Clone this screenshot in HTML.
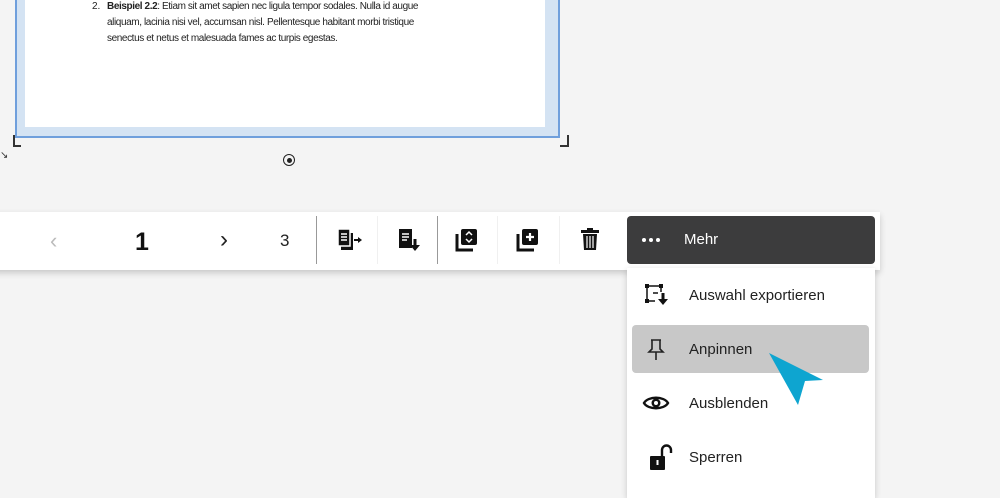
<!DOCTYPE html>
<html><head><meta charset="utf-8"><style>
*{margin:0;padding:0;box-sizing:border-box}
body{width:1000px;height:487px;background:#f4f4f4;position:relative;overflow:hidden;font-family:"Liberation Sans",sans-serif;color:#111}
.abs{position:absolute}
</style></head><body>
<div class="abs" style="left:15px;top:-5px;width:545px;height:143px;border:2px solid #6f9fdc;background:#d4e3f3"></div>
<div class="abs" style="left:25px;top:0;width:520px;height:127px;background:#fff"></div>
<div class="abs" style="left:92px;top:-1px;font-size:10px;line-height:16px;color:#222">2.</div>
<div class="abs" style="left:107px;top:-1px;font-size:10px;line-height:16px;color:#222;width:340px;letter-spacing:-0.4px;white-space:nowrap"><b>Beispiel 2.2</b>: Etiam sit amet sapien nec ligula tempor sodales. Nulla id augue<br>aliquam, lacinia nisi vel, accumsan nisl. Pellentesque habitant morbi tristique<br>senectus et netus et malesuada fames ac turpis egestas.</div>
<div class="abs" style="left:13px;top:135px;width:8px;height:12px;border-left:2px solid #333;border-bottom:2px solid #333"></div>
<div class="abs" style="left:560px;top:135px;width:9px;height:12px;border-right:2px solid #333;border-bottom:2px solid #333"></div>
<div class="abs" style="left:283px;top:154px;width:12px;height:12px;border:1.5px solid #222;border-radius:50%"></div>
<div class="abs" style="left:286.5px;top:157.5px;width:5px;height:5px;background:#222;border-radius:50%"></div>
<div class="abs" style="left:0;top:150px;font-size:10px;color:#333">↘</div>

<div class="abs" style="left:-10px;top:212px;width:890px;height:58px;background:#fff;box-shadow:0 3px 6px rgba(0,0,0,.18)"></div>
<div class="abs" style="left:50px;top:228px;font-size:22px;color:#bbb">‹</div>
<div class="abs" style="left:135px;top:228px;font-size:25px;color:#111;font-weight:bold">1</div>
<div class="abs" style="left:220px;top:226px;font-size:24px;color:#222">›</div>
<div class="abs" style="left:280px;top:231px;font-size:17px;color:#222">3</div>
<div class="abs" style="left:316px;top:216px;width:1px;height:48px;background:#999"></div>
<div class="abs" style="left:377px;top:216px;width:1px;height:48px;background:#f0f0f0"></div>
<div class="abs" style="left:437px;top:216px;width:1px;height:48px;background:#999"></div>
<div class="abs" style="left:497px;top:216px;width:1px;height:48px;background:#f0f0f0"></div>
<div class="abs" style="left:559px;top:216px;width:1px;height:48px;background:#f0f0f0"></div>
<svg class="abs" style="left:337px;top:228px" width="26" height="24" viewBox="0 0 26 24"><rect x="4" y="5" width="12" height="17" fill="#111"/><rect x="1" y="1" width="12" height="17" fill="#111" stroke="#fff" stroke-width="1.5"/><path d="M4 6h6M4 9h6M4 12h6" stroke="#fff" stroke-width="1.5"/><path d="M17 12h5" stroke="#111" stroke-width="2"/><path d="M21 9l4 3-4 3z" fill="#111"/></svg>
<svg class="abs" style="left:398px;top:228px" width="24" height="26" viewBox="0 0 24 26"><rect x="1" y="1" width="13" height="19" fill="#111"/><path d="M4 6h7M4 9h7M4 12h5" stroke="#fff" stroke-width="1.5"/><path d="M17 11v8" stroke="#111" stroke-width="3"/><path d="M12 17h10l-5 6z" fill="#111"/></svg>
<svg class="abs" style="left:455px;top:228px" width="24" height="24" viewBox="0 0 24 24"><path d="M2 6v16h16" stroke="#111" stroke-width="3" fill="none"/><rect x="6" y="1" width="16" height="16" rx="2" fill="#111"/><path d="M11 7l3-3 3 3M11 11l3 3 3-3" stroke="#fff" stroke-width="1.5" fill="none"/></svg>
<svg class="abs" style="left:516px;top:228px" width="24" height="24" viewBox="0 0 24 24"><path d="M2 6v16h16" stroke="#111" stroke-width="3" fill="none"/><rect x="6" y="1" width="16" height="16" rx="2" fill="#111"/><path d="M14 5v8M10 9h8" stroke="#fff" stroke-width="2.2"/></svg>
<svg class="abs" style="left:580px;top:227px" width="20" height="24" viewBox="0 0 20 24"><rect x="7" y="1" width="6" height="2" fill="#111"/><rect x="1" y="3" width="18" height="3" fill="#111"/><path d="M3 7h14l-1 16H4z" fill="#111"/><path d="M7 9v12M10 9v12M13 9v12" stroke="#fff" stroke-width="1.2"/></svg>
<div class="abs" style="left:627px;top:216px;width:248px;height:48px;background:#3c3c3d;border-radius:4px"></div>
<div class="abs" style="left:642px;top:238px;width:4px;height:4px;border-radius:50%;background:#fff;box-shadow:7px 0 0 #fff,14px 0 0 #fff"></div>
<div class="abs" style="left:684px;top:231px;font-size:15px;color:#fff">Mehr</div>
<div class="abs" style="left:627px;top:268px;width:248px;height:230px;background:#fff;box-shadow:0 2px 6px rgba(0,0,0,.18)"></div>
<div class="abs" style="left:632px;top:325px;width:237px;height:48px;background:#c8c8c8;border-radius:4px"></div>
<div class="abs" style="left:689px;top:287px;font-size:15px;color:#222">Auswahl exportieren</div>
<div class="abs" style="left:689px;top:341px;font-size:15px;color:#222">Anpinnen</div>
<div class="abs" style="left:689px;top:395px;font-size:15px;color:#222">Ausblenden</div>
<div class="abs" style="left:689px;top:449px;font-size:15px;color:#222">Sperren</div>
<svg class="abs" style="left:645px;top:284px" width="24" height="22" viewBox="0 0 24 22"><path d="M2 2h14M2 2v15h8M16 2v6" stroke="#111" stroke-width="1.5" fill="none"/><rect x="0" y="0" width="4" height="4" fill="#111"/><rect x="14" y="0" width="4" height="4" fill="#111"/><rect x="0" y="15" width="4" height="4" fill="#111"/><path d="M8 9h5" stroke="#111" stroke-width="1.5"/><path d="M18 9v7" stroke="#111" stroke-width="3"/><path d="M13 15h10l-5 6z" fill="#111"/></svg>
<svg class="abs" style="left:647px;top:338px" width="18" height="24" viewBox="0 0 18 24"><path d="M4 2h10M5 2v9l-3 3h14l-3-3V2M9 14v8" stroke="#222" stroke-width="1.6" fill="none"/></svg>
<svg class="abs" style="left:642px;top:394px" width="28" height="18" viewBox="0 0 28 18"><path d="M2 9C6 2 22 2 26 9C22 16 6 16 2 9z" stroke="#111" stroke-width="2.4" fill="none"/><circle cx="14" cy="9" r="4.5" fill="#111"/><circle cx="14" cy="9" r="2" fill="#fff"/></svg>
<svg class="abs" style="left:648px;top:444px" width="26" height="28" viewBox="0 0 26 28"><path d="M14 12V6a4.5 4.5 0 0 1 9 0v3" stroke="#111" stroke-width="2.4" fill="none"/><rect x="2" y="12" width="15" height="14" rx="1" fill="#111"/><rect x="8.5" y="16" width="2" height="5" fill="#fff"/></svg>
<svg class="abs" style="left:765px;top:350px" width="60" height="56" viewBox="0 0 60 56"><path d="M4 3L58 30L40 31L33 55Z" fill="#0ea5d0"/></svg>
</body></html>
